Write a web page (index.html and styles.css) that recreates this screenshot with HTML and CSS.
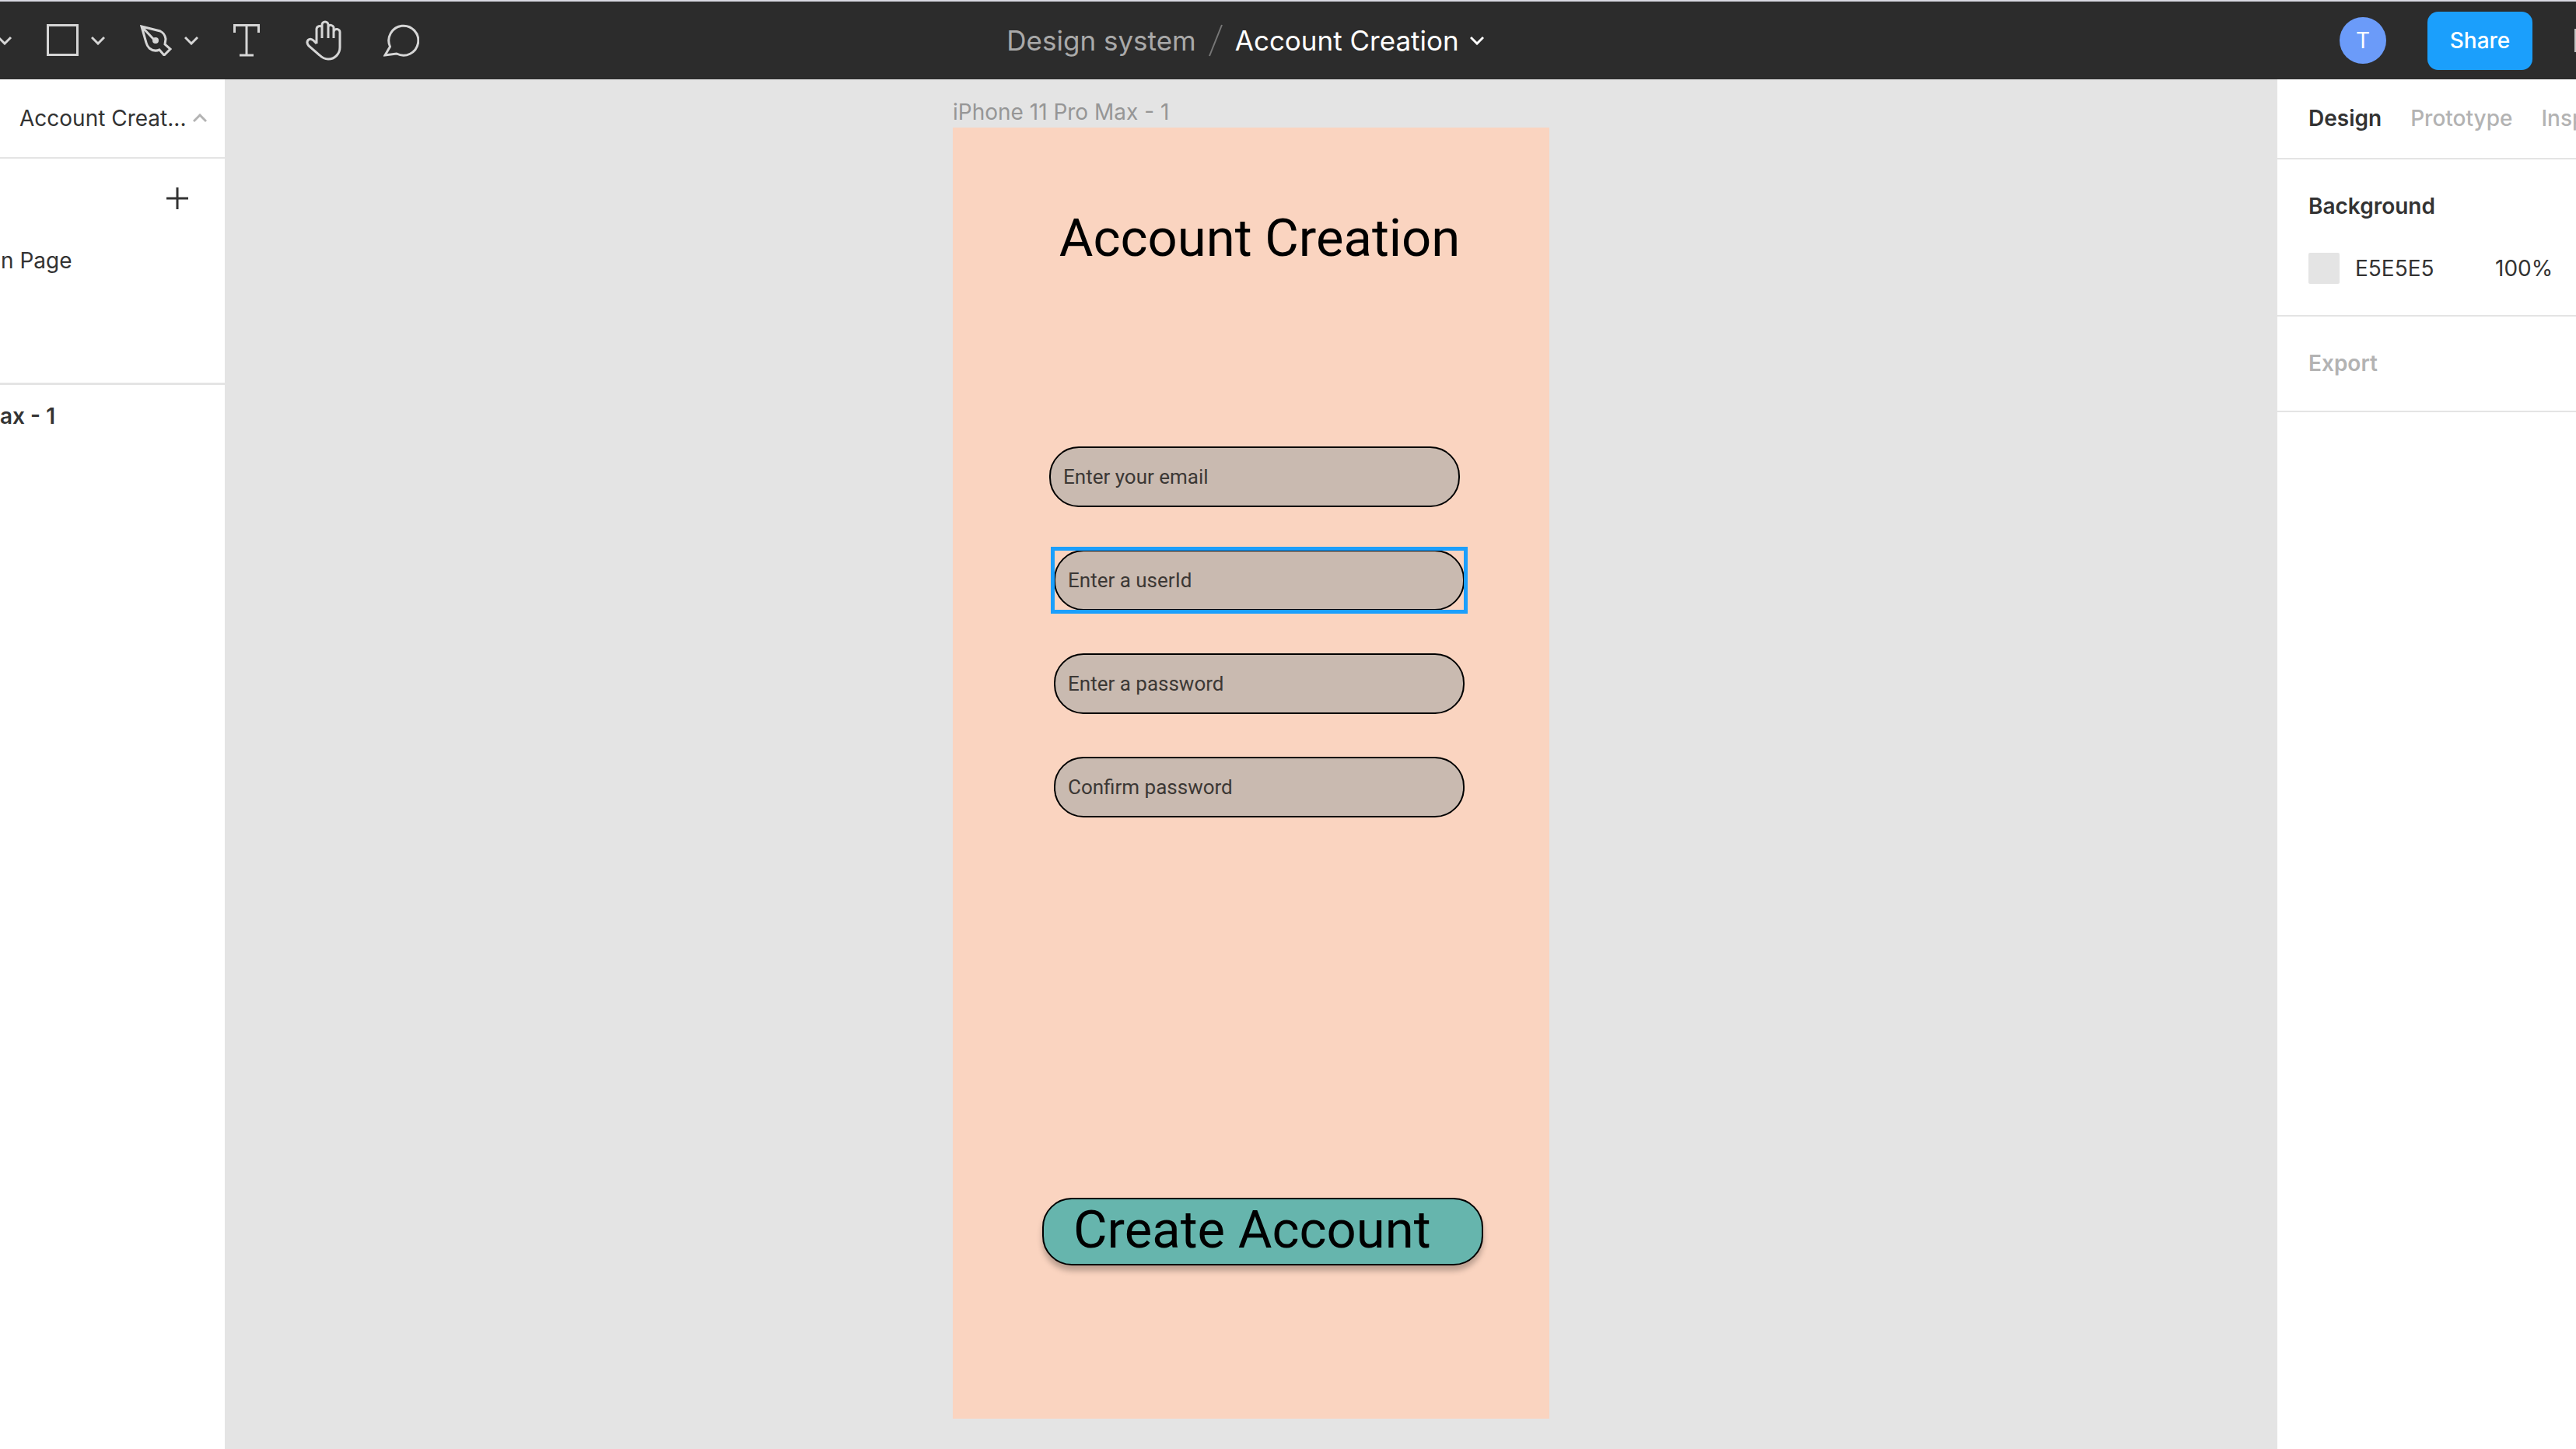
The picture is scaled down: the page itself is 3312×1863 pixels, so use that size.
FILE: index.html
```html
<!DOCTYPE html>
<html lang="en">
<head>
<meta charset="utf-8">
<title>Account Creation</title>
<link rel="stylesheet" href="styles.css">
</head>
<body>
<header class="topbar">
  <div class="tools">
    <button class="tool tool-edge" aria-label="Move options"><svg width="16" height="12" viewBox="0 0 16 12"><path d="M-2 2L6 10L14 2"/></svg></button>
    <button class="tool" aria-label="Rectangle"><svg width="42" height="42" viewBox="0 0 42 42"><rect x="1.5" y="1.5" width="38" height="38"/></svg></button>
    <button class="tool tool-caret" aria-label="Shape options"><svg width="18" height="12" viewBox="0 0 18 12"><path d="M1 2L9 10L17 2"/></svg></button>
    <button class="tool tool-pen" aria-label="Pen"><svg width="42" height="40" viewBox="0 0 42 40"><path d="M2 2L26 8Q32 11 33 18L32 25L39 31L31 39L25 32Q18 35 12 30Q9 27 8 23Z M2 2L18 19"/><circle class="solid" cx="20" cy="20" r="4"/></svg></button>
    <button class="tool tool-caret" aria-label="Pen options"><svg width="18" height="12" viewBox="0 0 18 12"><path d="M1 2L9 10L17 2"/></svg></button>
    <button class="tool tool-text" aria-label="Text"><svg width="34" height="42" viewBox="0 0 34 42"><path d="M1.5 11V1.5H32.5V11M17 1.5V40M8 40H26"/></svg></button>
    <button class="tool tool-hand" aria-label="Hand"><svg width="46" height="52" viewBox="0 0 46 52"><path d="M14 30V11A4 4 0 0 1 21 9M21 23V6A4 4 0 0 1 29 6V23M29 8A4 4 0 0 1 36 9V23M36 15A4 4 0 0 1 44 16V35A15 15 0 0 1 29 50C25 50 21 48 18 45L4 33C-1 27 5 21 10 26L14 30"/></svg></button>
    <button class="tool tool-comment" aria-label="Comment"><svg width="46" height="42" viewBox="0 0 46 42"><path d="M8.5 29A19 19 0 1 1 17 38L2 40Z"/></svg></button>
  </div>
  <nav class="crumbs" aria-label="File">
    <a class="crumb-parent" href="#">Design system</a>
    <svg class="slash" width="18" height="42" viewBox="0 0 18 42"><path d="M1 41L17 1"/></svg>
    <button class="crumb-file">Account Creation<svg width="18" height="12" viewBox="0 0 18 12"><path d="M1 2L9 10L17 2"/></svg></button>
  </nav>
  <div class="actions">
    <span class="avatar">T</span>
    <button class="share">Share</button>
    <span class="present"></span>
  </div>
</header>
<main class="workspace">
  <aside class="layers">
    <button class="page-switch">Account Creat...<svg width="18" height="12" viewBox="0 0 18 12"><path d="M1 10L9 2L17 10"/></svg></button>
    <section class="pages">
      <button class="add" aria-label="Add page"><svg width="28" height="28" viewBox="0 0 28 28"><path d="M14 0V28M0 14H28"/></svg></button>
      <a class="page" href="#">n Page</a>
    </section>
    <a class="layer" href="#">ax - 1</a>
  </aside>
  <section class="canvas">
    <div class="artboard">
      <div class="artboard-name">iPhone 11 Pro Max - 1</div>
      <form class="frame">
        <h1 class="title">Account Creation</h1>
        <div class="fields">
          <input class="field field-first" type="email" placeholder="Enter your email" aria-label="Enter your email">
          <div class="selected"><input class="field" type="text" placeholder="Enter a userId" aria-label="Enter a userId"></div>
          <input class="field" type="password" placeholder="Enter a password" aria-label="Enter a password">
          <input class="field" type="password" placeholder="Confirm password" aria-label="Confirm password">
        </div>
        <button class="create" type="button">Create Account</button>
      </form>
    </div>
  </section>
  <aside class="inspector">
    <nav class="tabs">
      <button class="tab tab-active">Design</button>
      <button class="tab">Prototype</button>
      <button class="tab">Inspect</button>
    </nav>
    <section class="background">
      <h2 class="heading">Background</h2>
      <div class="fill">
        <span class="swatch"></span>
        <span class="hex">E5E5E5</span>
        <span>100%</span>
      </div>
    </section>
    <section class="export"><h2 class="heading heading-muted">Export</h2></section>
  </aside>
</main>
</body>
</html>
```

FILE: styles.css
```css
* { box-sizing: border-box; }

body {
  margin: 0;
  min-height: 100vh;
  display: flex;
  flex-direction: column;
  overflow: hidden;
  background: #e4e4e4;
  color: #333;
  font: 28px/36px Inter, sans-serif;
}

button {
  padding: 0;
  border: 0;
  background: none;
  color: inherit;
  font: inherit;
}

a { color: inherit; text-decoration: none; }
h1, h2 { margin: 0; }

svg {
  display: block;
  flex: none;
  fill: none;
  stroke: currentColor;
  stroke-width: 3;
}

/* Top bar */
.topbar {
  display: flex;
  align-items: center;
  height: 102px;
  border-top: 2px solid #dadae2;
  background: #2c2c2c;
  color: #fff;
}

.tools {
  flex: 1 1 0;
  display: flex;
  align-items: center;
  color: #d6d6d6;
}

.tool { flex: none; }
.tool-edge { margin-right: 44px; }
.tool-caret { margin-left: 15px; }
.tool-pen { margin-left: 45px; }
.tool-text { margin-left: 45px; }
.tool-hand { margin-left: 59px; }
.tool-comment { margin-left: 54px; }
.solid { fill: currentColor; stroke: none; }

.crumbs {
  display: flex;
  align-items: center;
  gap: 16px;
  padding-right: 110px;
  font-size: 35px;
  line-height: 44px;
}

.crumb-parent { color: #a9a9a9; }
.slash { color: #777; stroke-width: 2; }
.crumb-file { display: flex; align-items: center; gap: 14px; }

.actions {
  flex: 1 1 0;
  display: flex;
  justify-content: flex-end;
  align-items: center;
}

.avatar {
  width: 60px;
  height: 60px;
  border-radius: 50%;
  background: #6b9bf9;
  line-height: 60px;
  text-align: center;
}

.share {
  width: 135px;
  height: 75px;
  margin: 0 54px 0 53px;
  border-radius: 14px;
  background: #1b9ffc;
  font-weight: 500;
}

.present { width: 2px; height: 30px; background: #c4c4c4; }

/* Workspace */
.workspace { flex: 1; display: flex; }

.layers {
  flex: none;
  width: 289px;
  background: #fff;
}

.page-switch {
  display: flex;
  align-items: center;
  justify-content: space-between;
  width: 100%;
  height: 102px;
  padding: 0 23px 0 25px;
  border-bottom: 2px solid #e4e4e4;
}

.page-switch svg { color: #b3b3b3; }

.pages {
  display: flex;
  flex-direction: column;
  gap: 48px;
  height: 291px;
  padding-top: 37px;
  border-bottom: 3px solid #e4e4e4;
}

.add { align-self: flex-end; margin-right: 47px; }
.page { padding-left: 1px; }

.layer {
  display: block;
  padding-top: 22px;
  font-weight: 600;
}

/* Canvas */
.canvas {
  flex: 1;
  display: flex;
  justify-content: center;
  align-items: flex-start;
}

.artboard { width: 767px; padding-top: 24px; }

.artboard-name { padding-bottom: 2px; color: #969696; }

.frame {
  display: flex;
  flex-direction: column;
  align-items: flex-start;
  height: 1660px;
  background: #fad4c0;
  color: #000;
  font-family: Roboto, sans-serif;
}

.title {
  align-self: center;
  margin: 102px 0 228px 22px;
  font-size: 67px;
  font-weight: 400;
  line-height: 80px;
}

.fields {
  display: flex;
  flex-direction: column;
  gap: 55px;
  padding-left: 130px;
}

.field {
  display: block;
  width: 528px;
  height: 78px;
  padding: 0 0 0 16px;
  border: 2px solid #000;
  border-radius: 38px;
  background: #c9bab0;
  font: 26px/32px Roboto, sans-serif;
}

.field::placeholder { color: #3c3835; opacity: 1; }
.field-first { margin-left: -6px; }

/* Selection outline drawn over the field's edge */
.selected { position: relative; }
.selected::after {
  content: "";
  position: absolute;
  inset: -4px;
  border: 5px solid #1b9ffc;
}

.create {
  width: 567px;
  height: 87px;
  margin: 489px 0 0 115px;
  padding: 0 0 6px 38px;
  border: 2px solid #000;
  border-radius: 38px;
  background: #66b5ad;
  box-shadow: 0 7px 7px rgba(0, 0, 0, 0.25);
  font-size: 67px;
  line-height: 76px;
  text-align: left;
}

/* Inspector */
.inspector {
  flex: none;
  width: 384px;
  overflow: hidden;
  background: #fff;
}

.tabs {
  display: flex;
  align-items: center;
  gap: 37px;
  height: 103px;
  padding: 0 0 2px 40px;
  border-bottom: 2px solid #e4e4e4;
}

.tab { color: #b3b3b3; font-weight: 500; }
.tab-active { color: #333; font-weight: 600; }

.background {
  height: 202px;
  padding: 42px 0 0 40px;
  border-bottom: 2px solid #e4e4e4;
}

.heading { font-size: 28px; font-weight: 600; line-height: 36px; }
.heading-muted { color: #b3b3b3; }

.fill { display: flex; align-items: center; margin-top: 42px; }

.swatch {
  width: 40px;
  height: 40px;
  margin-right: 20px;
  border-radius: 2px;
  background: #e4e4e4;
}

.hex { width: 180px; }

.export {
  height: 123px;
  padding: 42px 0 0 40px;
  border-bottom: 2px solid #e4e4e4;
}
```
